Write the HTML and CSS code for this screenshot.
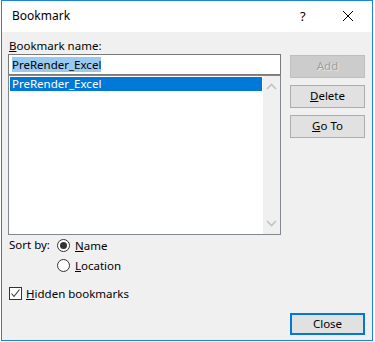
FILE: index.html
```html
<!DOCTYPE html>
<html>
<head>
<meta charset="utf-8">
<link rel="stylesheet" href="styles.css">
</head>
<body>
<div class="window">
  <div class="titlebar">
    <span class="title">Bookmark</span>
    <span class="help">?</span>
    <span class="close-x">
      <svg width="12" height="12" viewBox="0 0 12 12"><path d="M1 1 L11 11 M11 1 L1 11" stroke="#000" stroke-width="1" fill="none"/></svg>
    </span>
  </div>
  <div class="content">
    <div class="top">
      <div class="left">
        <div class="label"><u>B</u>ookmark name:</div>
        <div class="input"><span class="sel">PreRender_Excel</span></div>
        <div class="list">
          <div class="items">
            <div class="item selected">PreRender_Excel</div>
          </div>
          <div class="scrollbar">
            <svg class="arrow" width="11" height="7" viewBox="0 0 11 7"><path d="M1 6 L5.5 1.5 L10 6" stroke="#c2c2c2" stroke-width="1.6" fill="none"/></svg>
            <svg class="arrow" width="11" height="7" viewBox="0 0 11 7"><path d="M1 1 L5.5 5.5 L10 1" stroke="#c2c2c2" stroke-width="1.6" fill="none"/></svg>
          </div>
        </div>
      </div>
      <div class="right">
        <div class="btn disabled">Add</div>
        <div class="btn"><u>D</u>elete</div>
        <div class="btn"><u>G</u>o To</div>
      </div>
    </div>
    <div class="sort">
      <div class="sort-label">Sort by:</div>
      <div class="radios">
        <div class="radio-row"><span class="radio checked"></span><span><u>N</u>ame</span></div>
        <div class="radio-row"><span class="radio"></span><span><u>L</u>ocation</span></div>
      </div>
    </div>
    <div class="check-row">
      <span class="checkbox">
        <svg width="11" height="11" viewBox="0 0 11 11"><path d="M1.5 5.5 L4 8.5 L9.5 1.5" stroke="#333" stroke-width="1.1" fill="none"/></svg>
      </span>
      <span><u>H</u>idden bookmarks</span>
    </div>
    <div class="bottom">
      <div class="btn default">Close</div>
    </div>
  </div>
</div>
</body>
</html>
```

FILE: styles.css
```css
* { box-sizing: border-box; }
html, body { margin: 0; padding: 0; background: #ffffff; }
body {
  font-family: "Noto Sans", "Open Sans", sans-serif;
  font-size: 11.5px;
  color: #000;
}
.window {
  margin-left: 1px;
  width: 372px;
  height: 341px;
  border: 1px solid #1c84dc;
  display: flex;
  flex-direction: column;
}
.titlebar {
  height: 31px;
  background: #fff;
  display: flex;
  align-items: center;
  padding-left: 10px;
  font-size: 12px;
}
.title { flex: 1; margin-top: -2px; }
.help { width: 14px; margin-right: 28px; font-size: 13px; margin-top: -2px; }
.close-x { width: 12px; height: 12px; margin-right: 18px; display: flex; margin-top: -2px; }
.content {
  flex: 1;
  background: #f0f0f0;
  padding: 6px 7px 0 6px;
  display: flex;
  flex-direction: column;
}
.top { display: flex; gap: 9px; }
.left { width: 273px; display: flex; flex-direction: column; }
.label { height: 16px; line-height: 16px; padding-left: 1px; }
.input {
  height: 21px;
  background: #fff;
  border: 1px solid #7a7a7a;
  padding: 2px 0 0 3px;
  line-height: 15px;
}
.sel { background: #99c9ef; display: inline-block; height: 15px; }
.list {
  margin-top: 0;
  height: 160px;
  border: 1px solid #828790;
  background: #fff;
  display: flex;
}
.items { flex: 1; padding: 1px 1px 0 1px; }
.item { height: 14px; line-height: 13px; padding-left: 2px; }
.item.selected { background: #0078d7; color: #fff; }
.scrollbar {
  width: 17px;
  background: #f0f0f0;
  display: flex;
  flex-direction: column;
  justify-content: space-between;
  align-items: center;
  padding: 7px 0 7px;
}
.arrow { display: block; }
.right { width: 75px; padding-top: 17px; display: flex; flex-direction: column; gap: 7px; }
.btn {
  height: 23px;
  border: 1px solid #adadad;
  background: #e1e1e1;
  text-align: center;
  line-height: 20px;
}
.btn.disabled { background: #cccccc; border-color: #bfbfbf; color: #a0a0a0; text-shadow: 1px 1px 0 #e8e8e8; }
.btn.default { border: 2px solid #0078d7; height: 22px; line-height: 17px; width: 75px; }
.sort { display: flex; margin-top: 0; }
.sort-label { width: 49px; padding-left: 1px; height: 20px; line-height: 20px; }
.radios { display: flex; flex-direction: column; }
.radio-row { height: 20px; display: flex; align-items: center; gap: 5px; }
.radio {
  width: 13px; height: 13px; border-radius: 50%;
  border: 1px solid #333; background: #fff;
  display: flex; align-items: center; justify-content: center;
}
.radio.checked::after {
  content: ""; width: 7px; height: 7px; border-radius: 50%; background: #333;
}
.check-row { margin-top: 8px; height: 20px; display: flex; align-items: center; gap: 4px; padding-left: 1px; }
.checkbox {
  width: 13px; height: 13px; border: 1px solid #333; background: #fff;
  display: flex; align-items: center; justify-content: center;
}
.checkbox svg { display: block; }
.bottom { margin-top: 10px; display: flex; justify-content: flex-end; }
```
